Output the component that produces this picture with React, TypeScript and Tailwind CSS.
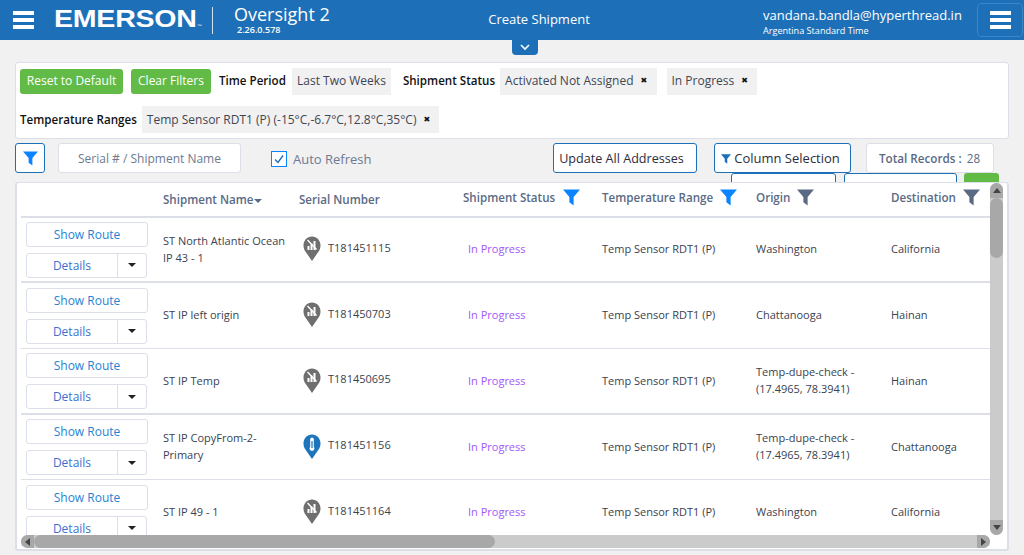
import React from "react";

const rows = [
  { name: ["ST North Atlantic Ocean", "IP 43 - 1"], serial: "T181451115", origin: ["Washington"], dest: "California", blue: false, h: "h-[65px]", thick: true },
  { name: ["ST IP left origin"], serial: "T181450703", origin: ["Chattanooga"], dest: "Hainan", blue: false, h: "h-[66px]", thick: false },
  { name: ["ST IP Temp"], serial: "T181450695", origin: ["Temp-dupe-check -", "(17.4965, 78.3941)"], dest: "Hainan", blue: false, h: "h-[66px]", thick: true },
  { name: ["ST IP CopyFrom-2-", "Primary"], serial: "T181451156", origin: ["Temp-dupe-check -", "(17.4965, 78.3941)"], dest: "Chattanooga", blue: true, h: "h-[65px]", thick: false },
  { name: ["ST IP 49 - 1"], serial: "T181451164", origin: ["Washington"], dest: "California", blue: false, h: "h-[66px]", thick: false },
];

function Hamburger() {
  return (
    <div className="flex w-[21px] flex-col gap-[3px]">
      <div className="h-[4px] bg-white" />
      <div className="h-[4px] bg-white" />
      <div className="h-[4px] bg-white" />
    </div>
  );
}

function Funnel({ color, size }: { color: string; size: number }) {
  return (
    <svg width={size} height={size} viewBox="0 0 16 16" className="shrink-0">
      <path d="M0 0.5H16L10 7.5V15.5L6 12.5V7.5Z" fill={color} />
    </svg>
  );
}

function Pin({ blue }: { blue: boolean }) {
  const c = blue ? "#1d75bc" : "#6f6f6f";
  return (
    <svg width="18" height="25" viewBox="0 0 18 25" className="shrink-0">
      <path d="M9 25L2.4 15.4C1.2 13.8 0.5 11.9 0.5 9.4C0.5 4.4 4.2 0.5 9 0.5C13.8 0.5 17.5 4.4 17.5 9.4C17.5 11.9 16.8 13.8 15.6 15.4Z" fill={c} />
      {blue ? (
        <g>
          <rect x="7.2" y="3.5" width="3.6" height="11" rx="1.8" fill="#fff" />
          <circle cx="9" cy="14.5" r="2.4" fill="#fff" />
          <rect x="8.4" y="7" width="1.2" height="7" fill={c} />
        </g>
      ) : (
        <g fill="#fff">
          <rect x="4.5" y="10" width="2" height="4" />
          <rect x="7.5" y="7.5" width="2" height="6.5" />
          <rect x="10.5" y="5" width="2" height="9" />
          <path d="M4 4.5L5 3.5L14 13L13 14Z" />
        </g>
      )}
    </svg>
  );
}

function Chip({ label, x }: { label: string; x?: boolean }) {
  return (
    <div className="flex h-[27px] items-center whitespace-nowrap bg-[#f1f1f1] px-[5px] text-[12px] text-[#3f4654]">
      {label}
      {x && <span className="ml-[7px] mr-[3px] w-[8px] font-['DejaVu_Sans',sans-serif] text-[8px] leading-none text-[#111]">✖</span>}
    </div>
  );
}

function Triangle({ dir }: { dir: "up" | "down" | "left" | "right" }) {
  const cls = {
    up: "border-x-[4px] border-b-[5px] border-x-transparent border-b-[#444]",
    down: "border-x-[4px] border-t-[5px] border-x-transparent border-t-[#444]",
    left: "border-y-[4px] border-r-[5px] border-y-transparent border-r-[#444]",
    right: "border-y-[4px] border-l-[5px] border-y-transparent border-l-[#444]",
  }[dir];
  return <div className={`h-0 w-0 ${cls}`} />;
}

export default function App() {
  return (
    <div className="flex h-[555px] w-[1024px] flex-col overflow-hidden bg-[#f1f1f1] font-['Open_Sans',sans-serif] text-[#3a4250]">
      {/* Header */}
      <header className="flex h-10 shrink-0 items-center bg-[#1d70b8] text-white">
        <div className="ml-[13px]">
          <Hamburger />
        </div>
        <div className="ml-[20px] w-[145px]">
          <div className="origin-left scale-x-[1.215] font-['Liberation_Sans',sans-serif] text-[23.5px] font-bold leading-none tracking-[-0.2px] whitespace-nowrap">
            EMERSON<span className="text-[4px] font-normal">™</span>
          </div>
        </div>
        <div className="ml-[13px] h-[27px] w-px bg-white/80" />
        <div className="ml-[21px] flex w-[120px] flex-col leading-none">
          <span className="text-[18px] leading-[19px] font-normal whitespace-nowrap">Oversight 2</span>
          <span className="ml-[3px] text-[9px] leading-[11px] font-semibold">2.26.0.578</span>
        </div>
        <div className="ml-[134px] w-[102px] text-center text-[13px] whitespace-nowrap">Create Shipment</div>
        <div className="ml-[173px] flex w-[210px] flex-col pt-[2px]">
          <span className="text-[13px] leading-[18px] whitespace-nowrap">vandana.bandla@hyperthread.in</span>
          <span className="text-[9.1px] leading-[13px] font-medium whitespace-nowrap">Argentina Standard Time</span>
        </div>
        <div className="ml-[4px] flex h-[34px] w-[46px] items-center justify-center rounded-[4px] border border-[#3a86c8]">
          <Hamburger />
        </div>
      </header>
      <div className="flex h-[15px] shrink-0">
        <div className="ml-[512px] flex h-[15px] w-[26px] items-center justify-center rounded-b-[4px] bg-[#1d70b8]">
          <svg width="10" height="7" viewBox="0 0 10 7">
            <path d="M1 1L5 5L9 1" stroke="#fff" strokeWidth="1.6" fill="none" />
          </svg>
        </div>
      </div>

      {/* Filters panel */}
      <section className="mx-[15px] mt-[7px] flex h-[77px] shrink-0 flex-col gap-[11px] rounded-[3px] border border-[#dcdfe8] bg-white pl-[4px] pt-[4px]">
        <div className="flex h-[28px] items-center">
          <button className="h-[25px] w-[103px] rounded-[3px] bg-[#62bb46] text-center text-[12px] text-white">Reset to Default</button>
          <button className="ml-[8px] h-[25px] w-[80px] rounded-[3px] bg-[#62bb46] text-center text-[12px] text-white">Clear Filters</button>
          <span className="ml-[8px] w-[68px] text-[11.6px] font-semibold whitespace-nowrap text-[#111]">Time Period</span>
          <div className="ml-[5px]"><Chip label="Last Two Weeks" /></div>
          <span className="ml-[12px] text-[11.6px] font-semibold text-[#111]">Shipment Status</span>
          <div className="ml-[5px]"><Chip label="Activated Not Assigned" x /></div>
          <div className="ml-[10px]"><Chip label="In Progress" x /></div>
        </div>
        <div className="flex h-[27px] items-center">
          <span className="text-[11.6px] font-semibold text-[#111]">Temperature Ranges</span>
          <div className="ml-[5px]"><Chip label="Temp Sensor RDT1 (P) (-15°C,-6.7°C,12.8°C,35°C)" x /></div>
        </div>
      </section>

      {/* Toolbar */}
      <div className="mx-[15px] mt-[4px] flex h-[30px] shrink-0 items-center">
        <button className="flex h-[30px] w-[30px] items-center justify-center rounded-[3px] border border-[#1d70b8] bg-white">
          <Funnel color="#0a84ff" size={15} />
        </button>
        <div className="ml-[13px] flex h-[30px] w-[183px] items-center justify-center rounded-[3px] border border-[#dcdfe8] bg-white pt-[2px] text-[12px] text-[#6e7a91]">
          Serial # / Shipment Name
        </div>
        <div className="mt-[2px] ml-[30px] flex h-[16px] w-[16px] items-center justify-center border border-[#0a84ff] bg-white">
          <svg width="12" height="12" viewBox="0 0 12 12">
            <path d="M2 6.5L5 9.5L10 2.5" stroke="#1d70b8" strokeWidth="1.4" fill="none" />
          </svg>
        </div>
        <span className="mt-[3px] ml-[6px] text-[13px] text-[#6e7a91]">Auto Refresh</span>
        <button className="ml-[181px] h-[30px] w-[144px] rounded-[3px] border border-[#1d70b8] bg-white pt-[2px] pr-[6px] text-[12.6px] text-[#2c2c3c]">Update All Addresses</button>
        <button className="ml-[17px] flex h-[30px] w-[137px] items-center justify-center gap-[3px] rounded-[3px] border border-[#1d70b8] bg-white pt-[1px] pr-[3px] text-[13px] text-[#2c2c3c]">
          <Funnel color="#1d70b8" size={10} />
          Column Selection
        </button>
        <div className="ml-[15px] flex h-[30px] w-[128px] items-center justify-center gap-[5px] rounded-[3px] border border-[#dcdfe8] bg-white pt-[1px] text-[11.7px] text-[#5a6a85]">
          <span className="font-semibold">Total Records :</span>
          <span>28</span>
        </div>
      </div>

      {/* Partly hidden buttons behind the table */}
      <div className="mx-[15px] flex h-[9px] shrink-0">
        <div className="ml-[716px] h-[12px] w-[105px] rounded-t-[3px] border border-[#1d70b8] bg-white" />
        <div className="ml-[8px] h-[12px] w-[113px] rounded-t-[3px] border border-[#1d70b8] bg-white" />
        <div className="ml-[7px] h-[12px] w-[35px] rounded-t-[3px] bg-[#62bb46]" />
      </div>

      {/* Table card */}
      <section className="relative mx-[15px] h-[369px] shrink-0 overflow-hidden rounded-[3px] border-2 border-t border-[#dcdfe8] bg-white">
        <div className="ml-[4px]">
          <div className="flex h-[35px] w-[969px] items-center border-b-[2px] border-[#dcdfe8] text-[11.6px] font-semibold text-[#5a6a85]">
            <div className="w-[142px]" />
            <div className="flex w-[136px] items-center">
              Shipment Name
              <span className="mt-[4px] ml-[1px]"><svg width="8" height="4" viewBox="0 0 8 4"><path d="M0 0H8L4 4Z" fill="#5a6a85" /></svg></span>
            </div>
            <div className="w-[164px]">Serial Number</div>
            <div className="flex w-[139px] items-center gap-[8px] pb-[4px]">
              Shipment Status <Funnel color="#0a84ff" size={17} />
            </div>
            <div className="flex w-[154px] items-center gap-[7px] pb-[4px]">
              Temperature Range <Funnel color="#0a84ff" size={17} />
            </div>
            <div className="flex w-[135px] items-center gap-[7px] pb-[4px]">
              Origin <Funnel color="#5a6a85" size={17} />
            </div>
            <div className="flex items-center gap-[7px] pb-[4px]">
              Destination <Funnel color="#5a6a85" size={17} />
            </div>
          </div>
          {rows.map((r) => (
            <div key={r.serial} className={`flex ${r.h} w-[969px] items-center ${r.thick ? "border-b-[2px]" : "border-b"} border-[#dcdfe8] text-[11px] leading-[17px] text-[#3a4250]`}>
              <div className="flex w-[142px] shrink-0 flex-col gap-[6px] pl-[5px]">
                <button className="h-[25px] w-[122px] rounded-[3px] border border-[#dcdfe8] text-[12px] text-[#1f84d6]">Show Route</button>
                <div className="flex h-[25px] w-[121px] rounded-[3px] border border-[#dcdfe8]">
                  <span className="flex w-[91px] items-center justify-center border-r border-[#dcdfe8] text-[12px] text-[#3d6fd0]">Details</span>
                  <span className="flex flex-1 items-center justify-center">
                    <svg width="8" height="4" viewBox="0 0 8 4"><path d="M0 0H8L4 4Z" fill="#222" /></svg>
                  </span>
                </div>
              </div>
              <div className="w-[136px] shrink-0 -translate-y-px">
                {r.name.map((n) => <div key={n} className="whitespace-nowrap">{n}</div>)}
              </div>
              <div className="flex w-[164px] shrink-0 -translate-y-px items-center gap-[7px] pl-[4px]">
                <Pin blue={r.blue} />
                <span className="-mt-[3px] text-[11px]">{r.serial}</span>
              </div>
              <div className="w-[139px] shrink-0 -translate-y-px pl-[5px] text-[#a259f7]">In Progress</div>
              <div className="w-[154px] shrink-0 -translate-y-px">Temp Sensor RDT1 (P)</div>
              <div className="w-[135px] shrink-0 -translate-y-px">
                {r.origin.map((o) => <div key={o} className="whitespace-nowrap">{o}</div>)}
              </div>
              <div className="shrink-0 -translate-y-px">{r.dest}</div>
            </div>
          ))}
        </div>

        {/* Vertical scrollbar */}
        <div className="absolute top-0 right-[4px] flex h-[352px] w-[13px] flex-col rounded-[7px] bg-[#cbcbcb]">
          <div className="flex h-[15px] items-center justify-center rounded-t-[7px] bg-[#a8a8a8]"><Triangle dir="up" /></div>
          <div className="h-[60px] rounded-[7px] bg-[#a8a8a8]" />
          <div className="flex-1" />
          <div className="flex h-[15px] items-center justify-center rounded-b-[7px] bg-[#a8a8a8]"><Triangle dir="down" /></div>
        </div>
        {/* Horizontal scrollbar */}
        <div className="absolute bottom-[1px] left-[4px] flex h-[13px] w-[969px] rounded-[7px] bg-[#cbcbcb]">
          <div className="flex w-[13px] items-center justify-center rounded-l-[7px] bg-[#a8a8a8]"><Triangle dir="left" /></div>
          <div className="h-full w-[461px] rounded-[7px] bg-[#a8a8a8]" />
          <div className="flex-1" />
          <div className="flex w-[13px] items-center justify-center rounded-r-[7px] bg-[#a8a8a8]"><Triangle dir="right" /></div>
        </div>
      </section>
    </div>
  );
}
